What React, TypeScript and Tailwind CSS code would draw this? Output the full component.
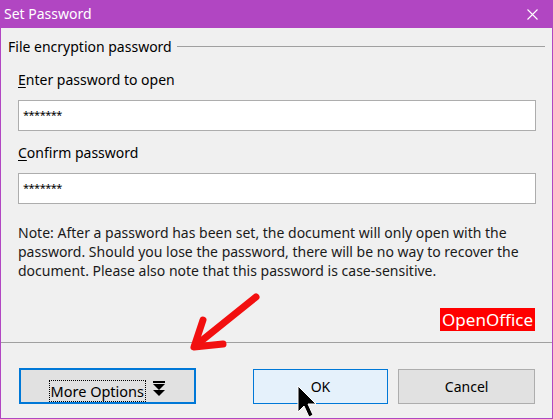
import React from 'react';

const font = { fontFamily: '"Noto Sans", "Open Sans", sans-serif' };

const PasswordField = ({ label, accel }: { label: string; accel: string }) => (
  <div className="flex flex-col">
    <div className="text-[14px] leading-[20px] text-black h-[20px]">
      <span className="underline underline-offset-2">{accel}</span>
      {label}
    </div>
    <div className="mt-[10px] h-[31px] bg-white border border-[#adadad] flex items-center pl-[4px] text-[11px] tracking-[-0.5px] text-black">
      *******
    </div>
  </div>
);

const App: React.FC = () => {
  return (
    <div className="relative w-[553px] h-[419px] bg-[#f0f0f0] border-x border-b border-[#b146c2] flex flex-col overflow-hidden" style={font}>
      <div className="h-[28px] bg-[#b146c2] flex items-center justify-between pl-[3px] pr-[14px] text-white">
        <span className="text-[14px] leading-none">Set Password</span>
        <svg width="11" height="11" viewBox="0 0 11 11" className="stroke-white" strokeWidth="1.1">
          <path d="M0.5 0.5 L10.5 10.5 M10.5 0.5 L0.5 10.5" />
        </svg>
      </div>

      <div className="flex items-center mt-[8px] pl-[7px] pr-[7px] h-[20px]">
        <span className="text-[14px] text-black whitespace-nowrap">File encryption password</span>
        <div className="flex-1 h-px bg-[#a0a0a0] ml-[5px]" />
      </div>

      <div className="flex flex-col gap-[12px] pl-[17px] pr-[16px] mt-[14px]">
        <PasswordField accel="E" label="nter password to open" />
        <PasswordField accel="C" label="onfirm password" />
      </div>

      <p className="pl-[17px] pr-[20px] mt-[19px] text-[14px] leading-[19px] text-[#1a1a1a]">
        Note: After a password has been set, the document will only open with the password. Should you lose the password, there will be no way to recover the document. Please also note that this password is case-sensitive.
      </p>

      <div className="flex justify-end pr-[17px] mt-[28px]">
        <span className="bg-[#ff0000] text-white text-[17px] leading-[23px] px-[2px]">OpenOffice</span>
      </div>

      <div className="h-px bg-[#a0a0a0] mt-[11px]" />

      <div className="flex items-center pl-[18px] pr-[17px] mt-[25px]">
        <button className="w-[177px] h-[36px] bg-[#e1e1e1] border-2 border-[#0078d7] flex items-end justify-center pb-[1px] gap-[6px] text-[14.5px] text-black">
          <span className="border border-dotted border-black px-[1px] leading-[20px] -mb-[1px]">More Options</span>
          <svg width="14" height="16" viewBox="0 0 14 16" className="mb-[4px] fill-black">
            <rect x="1" y="0" width="12" height="2" />
            <path d="M1 3 L13 3 L7 9 Z" />
            <path d="M1 9 L13 9 L7 15 Z" />
          </svg>
        </button>
        <button className="ml-[57px] w-[136px] h-[35px] bg-[#e5f1fb] border border-[#0078d7] text-[14px] text-black">OK</button>
        <button className="ml-[10px] w-[137px] h-[35px] bg-[#e1e1e1] border border-[#adadad] text-[14px] text-black">Cancel</button>
      </div>

      <svg className="absolute left-0 top-0 pointer-events-none" width="553" height="419">
        <g stroke="#f20f0f" strokeWidth="7" strokeLinecap="round" strokeLinejoin="round" fill="none">
          <path d="M255 297 L194 346" />
          <path d="M202 320 L193 347 L222 344" />
        </g>
        <path d="M297 386 L297 412 L303 406 L308 417 L312 415 L307 404 L315 404 Z" fill="black" stroke="white" strokeWidth="1" />
      </svg>
    </div>
  );
};

export default App;
